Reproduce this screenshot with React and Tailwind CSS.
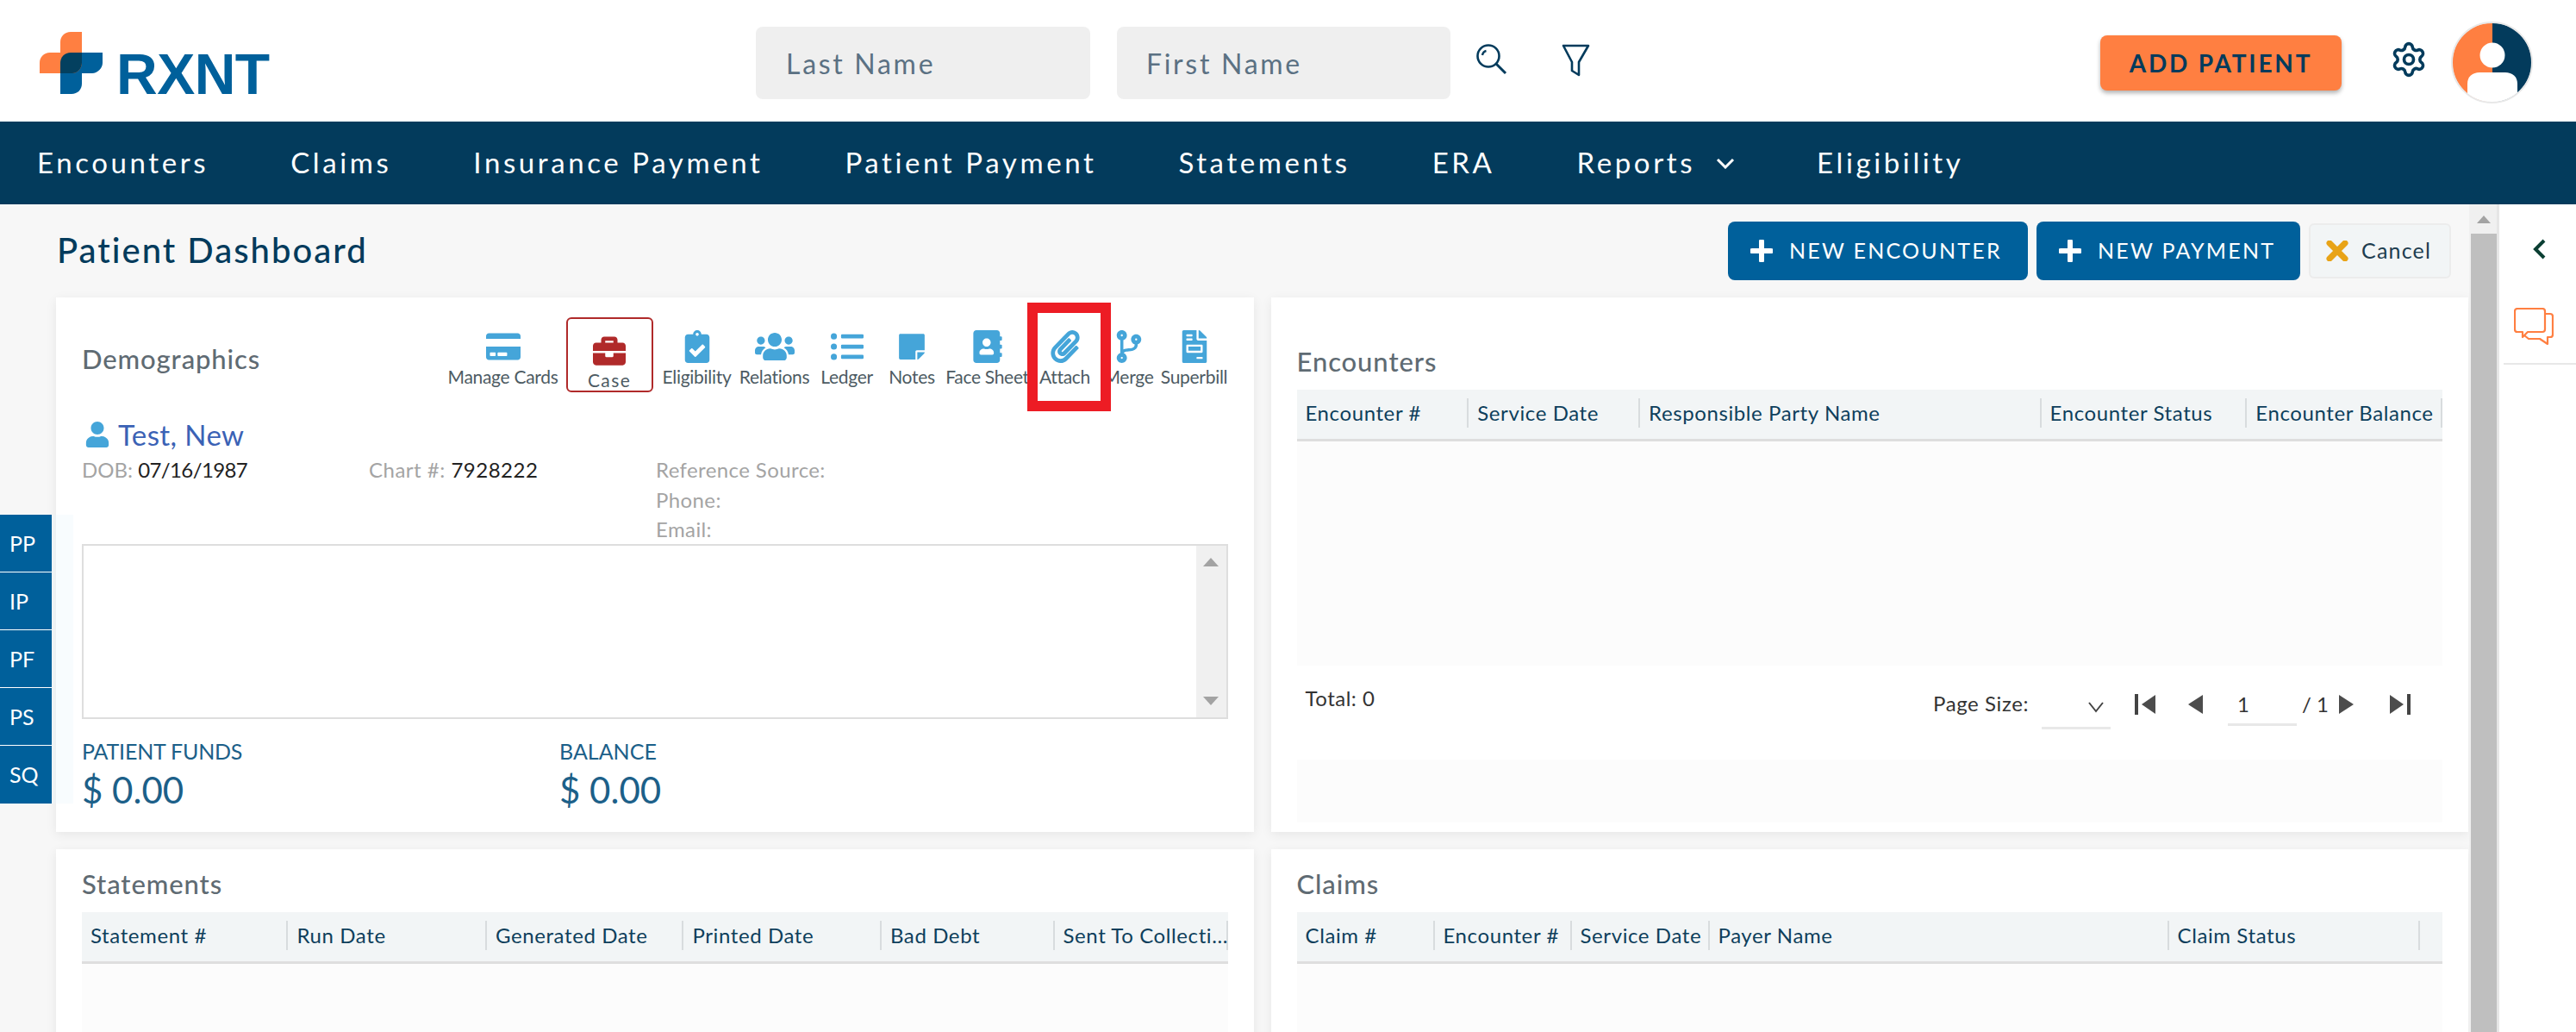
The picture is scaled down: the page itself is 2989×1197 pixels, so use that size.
import { Settings } from "lucide-react"
import {
  FaCreditCard, FaBriefcase, FaClipboardCheck, FaUsers, FaListUl, FaStickyNote,
  FaAddressBook, FaPaperclip, FaCodeBranch, FaFileInvoice, FaUser,
} from "react-icons/fa"

const nav = ["Encounters", "Claims", "Insurance Payment", "Patient Payment", "Statements", "ERA", "Reports", "Eligibility"]

const tools = [
  { label: "Manage Cards", Icon: FaCreditCard, size: 40, w: "w-[126px]", ml: "ml-0" },
  { label: "Case", Icon: FaBriefcase, size: 38, w: "w-[101px]", ml: "ml-[10px]", active: true },
  { label: "Eligibility", Icon: FaClipboardCheck, size: 38, w: "w-[78px]", ml: "ml-[12px]" },
  { label: "Relations", Icon: FaUsers, size: 46, w: "w-[80px]", ml: "ml-[11px]" },
  { label: "Ledger", Icon: FaListUl, size: 38, w: "w-[60px]", ml: "ml-[14px]" },
  { label: "Notes", Icon: FaStickyNote, size: 34, w: "w-[53px]", ml: "ml-[19px]" },
  { label: "Face Sheet", Icon: FaAddressBook, size: 38, w: "w-[90px]", ml: "ml-[16px]" },
  { label: "Attach", Icon: FaPaperclip, size: 38, w: "w-[56px]", ml: "ml-[17px]" },
  { label: "Merge", Icon: FaCodeBranch, size: 38, w: "w-[52px]", ml: "ml-[20px]" },
  { label: "Superbill", Icon: FaFileInvoice, size: 38, w: "w-[78px]", ml: "ml-[11px]" },
]

const encounterCols = [
  ["Encounter #", "w-[200px]"], ["Service Date", "w-[199px]"], ["Responsible Party Name", "w-[466px]"],
  ["Encounter Status", "w-[239px]"], ["Encounter Balance", "w-[227px]"],
]
const statementCols = [
  ["Statement #", "w-[240px]"], ["Run Date", "w-[231px]"], ["Generated Date", "w-[229px]"],
  ["Printed Date", "w-[230px]"], ["Bad Debt", "w-[201px]"], ["Sent To Collecti...", "w-[201px]"],
]
const claimCols = [
  ["Claim #", "w-[160px]"], ["Encounter #", "w-[159px]"], ["Service Date", "w-[160px]"],
  ["Payer Name", "w-[533px]"], ["Claim Status", "w-[291px]"],
]

function Logo() {
  return (
    <div className="flex items-end ml-[46px] mt-[5px] w-[266px] h-[72px]">
      <svg width="73" height="72" viewBox="0 0 73 72" className="shrink-0">
        <path d="M24 24V48H61C67 48 73 42 73 36V24Z M24 24V72H37C44 72 49 67 49 60V24Z" fill="#00609b" />
        <path d="M49 0V36C49 42 44 48 38 48H0V36C0 29 5 24 12 24H24V12C24 5 29 0 36 0Z" fill="#ff7f41" />
        <path d="M36 24H49V36C49 42 44 48 38 48H24V36C24 29 29 24 36 24Z" fill="#03405f" />
      </svg>
      <span className="ml-[16px] text-[66px] leading-[51px] h-[48px] font-bold text-[#00609b] tracking-[-0.5px] font-['Liberation_Sans',sans-serif]">RXNT</span>
    </div>
  )
}

function Avatar() {
  return (
    <svg width="95" height="95" viewBox="0 0 95 95" className="ml-[27px] mt-[4px] shrink-0">
      <defs>
        <clipPath id="avatarClip"><circle cx="47.5" cy="47.5" r="46" /></clipPath>
      </defs>
      <g clipPath="url(#avatarClip)">
        <rect width="48" height="95" fill="#ff7f41" />
        <rect x="48" width="47" height="95" fill="#033b5c" />
        <circle cx="48" cy="39" r="14.5" fill="#fff" />
        <path d="M19 95V72C19 64 25 59 33 59H63C71 59 77 64 77 72V95Z" fill="#fff" />
      </g>
      <circle cx="47.5" cy="47.5" r="46.5" fill="none" stroke="#e8e8e8" strokeWidth="2" />
    </svg>
  )
}

function GridHeader({ cols }) {
  return (
    <div className="flex h-[60px] pt-[10px] bg-[#f2f5f6] border-b-[3px] border-[#dedede]">
      {cols.map(([name, w]) => (
        <div key={name} className={`${w} h-[34px] pl-[10px] border-r-2 border-[#d8dcde] text-[24px] leading-[34px] text-[#0e3f5c] tracking-[0.6px] whitespace-nowrap`}>
          {name}
        </div>
      ))}
    </div>
  )
}

function PagerIcon({ flip, bar }) {
  return (
    <svg width={bar ? 24 : 18} height="24" viewBox={bar ? "0 0 24 24" : "0 0 18 24"} className={flip ? "rotate-180" : ""}>
      {bar && <rect x="0" y="0" width="4" height="24" fill="#444" />}
      <path d={bar ? "M24 1V23L8 12Z" : "M18 1V23L1 12Z"} fill="#4c4c4c" />
    </svg>
  )
}

function Pager() {
  return (
    <div className="flex justify-between h-[109px] text-[24px] text-[#333]">
      <div className="ml-[10px] mt-[23px] leading-[30px] tracking-[0.5px]">Total: 0</div>
      <div className="flex items-start mt-[29px] mr-[37px]">
        <span className="leading-[30px] tracking-[0.6px] w-[126px] whitespace-nowrap">Page Size:</span>
        <div className="relative w-[80px] h-[45px] border-b-[3px] border-[#e8e8e8]">
          <svg width="18" height="14" viewBox="0 0 18 14" className="absolute right-[8px] top-[12px]">
            <path d="M1 2L9 12L17 2" fill="none" stroke="#444" strokeWidth="2" />
          </svg>
        </div>
        <div className="flex items-center h-[24px] mt-[4px] ml-[28px]">
          <PagerIcon bar />
          <div className="ml-[37px]"><PagerIcon /></div>
        </div>
        <div className="ml-[29px] w-[80px] h-[41px] pl-[11px] border-b-[3px] border-[#e8e8e8] leading-[32px]">1</div>
        <span className="ml-[6px] w-[28px] leading-[32px] whitespace-nowrap">/ 1</span>
        <div className="flex items-center h-[24px] mt-[4px] ml-[15px]">
          <PagerIcon flip />
          <div className="ml-[41px]"><PagerIcon flip bar /></div>
        </div>
      </div>
    </div>
  )
}

function Card({ children, className = "" }) {
  return <section className={`bg-white shadow-[0_3px_12px_rgba(0,0,0,0.07)] px-[30px] ${className}`}>{children}</section>
}

function Demographics() {
  return (
    <Card className="h-[620px] pt-[23px]">
      <div className="flex items-start justify-between h-[87px]">
        <h2 className="mt-[28px] text-[31px] leading-[40px] text-[#5f6b73] tracking-[0.9px] font-medium">Demographics</h2>
        <div className="flex items-start">
          {tools.map(({ label, Icon, size, w, ml, active }) => (
            <div key={label} className={`${w} ${ml} h-[87px] flex flex-col items-center ${active ? "border-2 border-[#b02a2a] rounded-[6px] pt-[18px]" : "pt-[14px]"}`}>
              <div className="h-[40px] flex items-center justify-center">
                <Icon size={size} color={active ? "#b02a2a" : "#45a5d9"} />
              </div>
              <span className={`whitespace-nowrap text-[21px] leading-[28px] mt-px text-[#4d5b63] ${active ? "tracking-[1.4px]" : "tracking-[-0.3px]"}`}>{label}</span>
            </div>
          ))}
        </div>
      </div>
      <div className="flex items-center mt-[33px] h-[32px]">
        <FaUser size={30} color="#45a5d9" className="ml-[3px]" />
        <a className="ml-[9px] text-[33px] leading-[32px] tracking-[0.4px] text-[#3b62b5] whitespace-nowrap">Test, New</a>
      </div>
      <div className="flex mt-[8px] text-[24px] leading-[34.5px] text-[#a4a4a4] h-[103px]">
        <div className="w-[333px]">DOB: <span className="text-[#222] tracking-[-0.6px]">07/16/1987</span></div>
        <div className="w-[333px] tracking-[0.5px]">Chart #: <span className="text-[#222]">7928222</span></div>
        <div className="tracking-[0.4px]">
          <div>Reference Source:</div>
          <div>Phone:</div>
          <div>Email:</div>
        </div>
      </div>
      <div className="flex justify-end h-[203px] border-2 border-[#dedede]">
        <div className="w-[35px] bg-[#f0f0f0] flex flex-col justify-between items-center py-[14px]">
          <svg width="18" height="10" viewBox="0 0 18 10"><path d="M9 0L18 10H0Z" fill="#a3a3a3" /></svg>
          <svg width="18" height="10" viewBox="0 0 18 10"><path d="M0 0H18L9 10Z" fill="#a3a3a3" /></svg>
        </div>
      </div>
      <div className="flex mt-[22px] text-[#1c6089]">
        <div className="w-[554px]">
          <div className="text-[25px] leading-[30px] tracking-[-0.2px]">PATIENT FUNDS</div>
          <div className="mt-[5px] text-[42px] leading-[50px]">$ 0.00</div>
        </div>
        <div>
          <div className="text-[25px] leading-[30px]">BALANCE</div>
          <div className="mt-[5px] text-[42px] leading-[50px]">$ 0.00</div>
        </div>
      </div>
    </Card>
  )
}

function Encounters() {
  return (
    <Card className="h-[620px] pt-[54px]">
      <h2 className="text-[31px] leading-[40px] text-[#5f6b73] tracking-[0.9px] font-medium">Encounters</h2>
      <div className="mt-[13px]"><GridHeader cols={encounterCols} /></div>
      <div className="h-[260px] bg-[#fcfcfc]" />
      <Pager />
      <div className="h-[73px] bg-[#fcfcfc]" />
    </Card>
  )
}

function Lower({ title, cols }) {
  return (
    <Card className="h-[300px] pt-[20px]">
      <h2 className="text-[31px] leading-[40px] text-[#5f6b73] tracking-[0.9px] font-medium">{title}</h2>
      <div className="mt-[13px]"><GridHeader cols={cols} /></div>
      <div className="h-[200px] bg-[#fcfcfc]" />
    </Card>
  )
}

export default function App() {
  return (
    <div className="relative w-[2989px] h-[1197px] overflow-hidden bg-[#f7f7f7] font-['Lato',sans-serif]">
      <header className="flex items-center h-[141px] bg-white">
        <Logo />
        <input placeholder="Last Name" className="ml-[565px] mt-[5px] w-[388px] h-[84px] pl-[35px] rounded-[8px] bg-[#efefef] text-[32px] tracking-[2.7px] placeholder:text-[#5b7183] outline-none" />
        <input placeholder="First Name" className="ml-[31px] mt-[5px] w-[387px] h-[84px] pl-[34px] rounded-[8px] bg-[#efefef] text-[32px] tracking-[2.7px] placeholder:text-[#5b7183] outline-none" />
        <svg width="38" height="38" viewBox="0 0 38 38" className="ml-[28px] mb-[3px] shrink-0">
          <circle cx="16" cy="15" r="12.500" fill="none" stroke="#033b5c" strokeWidth="2.600" />
          <path d="M9 14C9.500 11.500 11 9.500 13.500 9" fill="none" stroke="#033b5c" strokeWidth="2.400" />
          <path d="M25 24L36 35" stroke="#033b5c" strokeWidth="3" />
        </svg>
        <svg width="33" height="38" viewBox="0 0 33 38" className="ml-[63px] mb-px shrink-0">
          <path d="M2 2H31L20 21V36L12 31V21Z" fill="none" stroke="#033b5c" strokeWidth="2.600" strokeLinejoin="round" />
        </svg>
        <button className="ml-[592px] mt-[5px] w-[280px] h-[64px] rounded-[8px] bg-[#ff7f41] shadow-[0_3px_5px_rgba(0,0,0,0.3)] text-[28px] font-bold tracking-[2.800px] text-[#033b5c] whitespace-nowrap">ADD PATIENT</button>
        <Settings size={44} color="#033b5c" strokeWidth={2} className="ml-[56px] mb-[4px] shrink-0" />
        <Avatar />
      </header>

      <nav className="flex items-center h-[96px] pl-[43px] gap-[95px] bg-[#033b5c] text-white text-[33px] tracking-[3.600px] whitespace-nowrap">
        {nav.map((item) => (
          <span key={item} className="flex items-center">
            {item}
            {item === "Reports" && (
              <svg width="22" height="13" viewBox="0 0 22 13" className="ml-[24px]"><path d="M2 2L11 11L20 2" fill="none" stroke="#fff" strokeWidth="3" /></svg>
            )}
          </span>
        ))}
      </nav>

      <div className="flex h-[960px]">
        <main className="flex-1 pl-[65px] pr-px">
          <div className="flex items-start justify-between h-[108px] pr-[20px]">
            <h1 className="mt-[28px] ml-px text-[40px] leading-[50px] font-medium tracking-[2px] text-[#033b5c]">Patient Dashboard</h1>
            <div className="flex items-start mt-[20px]">
              <button className="flex items-center pl-[26px] w-[348px] h-[68px] rounded-[8px] bg-[#00609b] text-white text-[25px] tracking-[2.250px] whitespace-nowrap">
                <svg width="26" height="26" viewBox="0 0 26 26" className="mr-[19px]"><path d="M13 2V24M2 13H24" stroke="#fff" strokeWidth="6" strokeLinecap="round" /></svg>
                NEW ENCOUNTER
              </button>
              <button className="flex items-center pl-[26px] ml-[10px] w-[306px] h-[68px] rounded-[8px] bg-[#00609b] text-white text-[25px] tracking-[2.250px] whitespace-nowrap">
                <svg width="26" height="26" viewBox="0 0 26 26" className="mr-[19px]"><path d="M13 2V24M2 13H24" stroke="#fff" strokeWidth="6" strokeLinecap="round" /></svg>
                NEW PAYMENT
              </button>
              <button className="flex items-center pl-[18px] ml-[10px] mt-[2px] w-[165px] h-[64px] rounded-[6px] bg-[#f2f5f6] border-2 border-[#ececec] text-[25px] tracking-[1.200px] text-[#1e3d50]">
                <svg width="26" height="24" viewBox="0 0 26 24" className="mr-[15px]"><path d="M4 3L22 21M22 3L4 21" stroke="#e8a317" strokeWidth="7" strokeLinecap="round" /></svg>
                Cancel
              </button>
            </div>
          </div>
          <div className="grid grid-cols-2 gap-[20px]">
            <Demographics />
            <Encounters />
            <Lower title="Statements" cols={statementCols} />
            <Lower title="Claims" cols={claimCols} />
          </div>
        </main>

        <div className="w-[35px] shrink-0 bg-[#f0f0f0] border-r-[3px] border-[#e6e6e6] pl-[2px]">
          <div className="flex justify-center h-[34px] pt-[13px]">
            <svg width="16" height="9" viewBox="0 0 16 9"><path d="M8 0L16 9H0Z" fill="#a3a3a3" /></svg>
          </div>
          <div className="w-[30px] h-[926px] bg-[#bfbfbf]" />
        </div>

        <aside className="w-[89px] shrink-0 bg-white pl-[5px]">
          <div className="h-[186px] border-b-[2px] border-[#e8e8e8]">
            <svg width="16" height="24" viewBox="0 0 16 24" className="ml-[34px] pt-[40px] box-content">
              <path d="M13 2L3 12L13 22" fill="none" stroke="#0b3f33" strokeWidth="4" />
            </svg>
            <svg width="46" height="44" viewBox="0 0 46 44" className="ml-[12px] mt-[56px]">
              <path d="M4 1H33C35 1 36 2 36 4V25C36 27 35 28 33 28H16L10 34V28H4C2 28 1 27 1 25V4C1 2 2 1 4 1Z" fill="#fff" stroke="#ff7f41" strokeWidth="2.200" strokeLinejoin="round" />
              <path d="M36 7H42C44 7 45 8 45 10V31C45 33 44 34 42 34H39V42L30 36H17L12 32" fill="none" stroke="#ff7f41" strokeWidth="2.200" strokeLinejoin="round" />
            </svg>
          </div>
        </aside>
      </div>

      {/* side tabs float over the page */}
      <div className="absolute left-0 top-[597px] w-[60px] shadow-[25px_0_0_rgba(235,245,252,0.35)]">
        {["PP", "IP", "PF", "PS", "SQ"].map((t) => (
          <div key={t} className="h-[67px] pl-[11px] bg-[#00609b] border-b border-white last:border-b-0 text-white text-[25px] leading-[66px]">{t}</div>
        ))}
      </div>

      {/* red annotation box around Attach */}
      <div className="absolute left-[1192px] top-[351px] w-[97px] h-[126px] border-[12px] border-[#ed1c24]" />
    </div>
  )
}
